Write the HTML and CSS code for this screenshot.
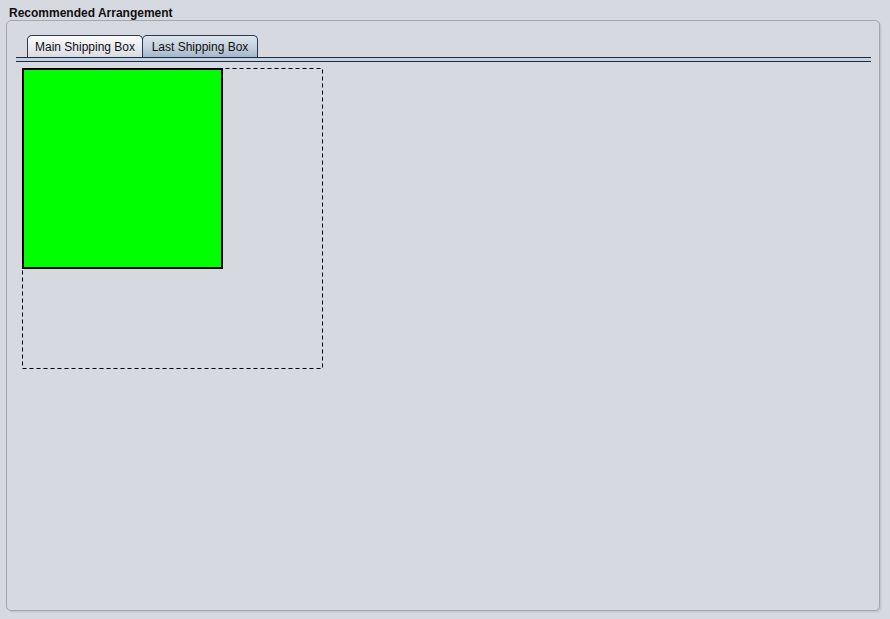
FILE: index.html
```html
<!DOCTYPE html>
<html>
<head>
<meta charset="utf-8">
<link rel="stylesheet" href="styles.css">
</head>
<body>
<div class="title">Recommended Arrangement</div>
<div class="panel">
  <div class="tabpane">
    <div class="tabs">
      <div class="tab">Main Shipping Box</div>
      <div class="tab selected">Last Shipping Box</div>
    </div>
    <div class="tabline"></div>
    <div class="canvas">
      <svg width="302" height="302" viewBox="0 0 302 302">
        <rect x="0.5" y="0.5" width="300" height="300" fill="none" stroke="#000" stroke-width="1" stroke-dasharray="4 3"/>
        <rect x="1" y="1" width="199" height="199" fill="#00ff00" stroke="#000" stroke-width="2"/>
      </svg>
    </div>
  </div>
</div>
</body>
</html>
```

FILE: styles.css
```css
html, body {
  margin: 0;
  padding: 0;
  background: #d6d9df;
  width: 890px;
  height: 619px;
  overflow: hidden;
  font-family: "Liberation Sans", Arial, sans-serif;
}

.title {
  height: 20px;
  box-sizing: border-box;
  padding: 7px 0 0 9px;
  font-size: 12px;
  font-weight: bold;
  line-height: 12px;
  color: #101010;
}

.panel {
  margin-left: 6px;
  width: 874px;
  height: 591px;
  box-sizing: border-box;
  border: 1px solid #a3a7ae;
  border-radius: 5px;
  box-shadow: 1px 1px 0 #c2c5cb, 2px 2px 0 #cdd0d5;
  background: #d6d9df;
}

.tabpane {
  padding: 14px 8px 0 9px;
}

.tabs {
  display: flex;
  padding-left: 11px;
  height: 22px;
  align-items: flex-end;
}

.tab {
  width: 116px;
  height: 22px;
  box-sizing: border-box;
  border: 1px solid #2b3850;
  border-bottom: none;
  border-radius: 5px 5px 0 0;
  background: linear-gradient(#fbfbfc, #e6e9ed 60%, #d9dde3);
  font-size: 12px;
  line-height: 23px;
  text-align: center;
  color: #111;
}

.tab.selected {
  margin-left: -1px;
  background: linear-gradient(#dde5ee, #c3d0dd 55%, #a3b7cb);
}

.tabline {
  height: 5px;
  box-sizing: border-box;
  border-top: 1px solid #1f2b40;
  border-bottom: 1px solid #1f2b40;
  background: #c5d3e1;
}

.canvas {
  padding: 6px 0 0 6px;
  line-height: 0;
}
```
